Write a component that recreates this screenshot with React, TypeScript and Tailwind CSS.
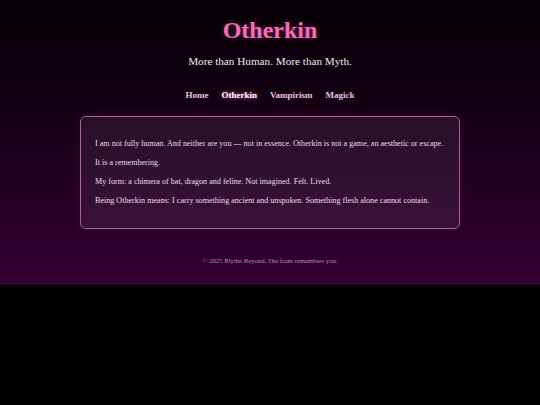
const serif = { fontFamily: '"Liberation Serif", "Times New Roman", serif' };

const links = ['Home', 'Otherkin', 'Vampirism', 'Magick'];

const paragraphs = [
  'I am not fully human. And neither are you — not in essence. Otherkin is not a game, an aesthetic or escape.',
  'It is a remembering.',
  'My form: a chimera of bat, dragon and feline. Not imagined. Felt. Lived.',
  'Being Otherkin means: I carry something ancient and unspoken. Something flesh alone cannot contain.',
];

export default function App() {
  return (
    <div className="min-h-screen bg-black" style={serif}>
      <div className="bg-gradient-to-b from-[#050005] to-[#330033] pb-[21px] pt-[18px]">
        <header className="text-center">
          <h1 className="text-[24px] font-bold leading-[24px] text-[#f66cb8] [text-shadow:0_0_6px_rgba(255,105,180,0.35)]">
            Otherkin
          </h1>
          <p className="mt-[14px] text-[11.2px] leading-[11px] text-[#f3e6f1]">More than Human. More than Myth.</p>
        </header>

        <nav className="mt-[24px] flex justify-center gap-[13px] text-[9px] font-bold leading-[9px]">
          {links.map((l) => (
            <a
              key={l}
              className={
                l === 'Otherkin'
                  ? 'text-white [text-shadow:0_0_4px_#ff69b4]'
                  : 'text-[#eec0e4]'
              }
            >
              {l}
            </a>
          ))}
        </nav>

        <main className="mx-auto mt-[16px] w-[380px] rounded-[6px] border border-[#b0609e] bg-[rgba(255,200,255,0.08)] px-[14px] py-[21px] shadow-[0_0_10px_rgba(255,105,180,0.12)]">
          <div className="flex flex-col gap-[7px] text-[8.1px] leading-[12px] text-[#ecdcea]">
            {paragraphs.map((p) => (
              <p key={p}>{p}</p>
            ))}
          </div>
        </main>

        <footer className="mt-[28px] text-center text-[6.7px] leading-[7px] text-[#b98ab0]">
          © 2025 Blythe Beyond. The form remembers you.
        </footer>
      </div>
    </div>
  );
}
